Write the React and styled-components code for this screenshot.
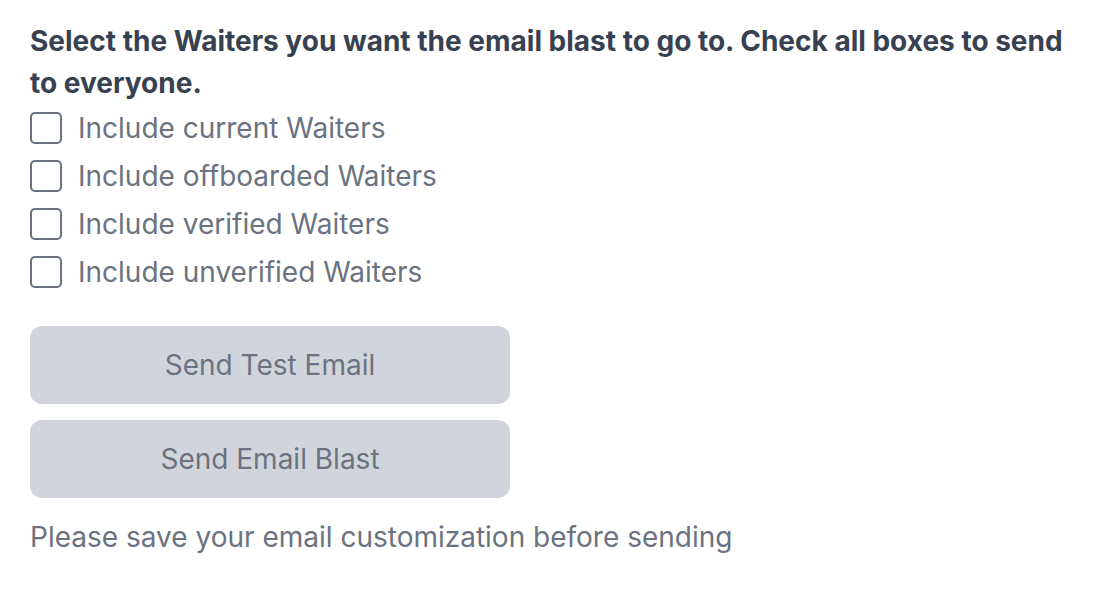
import React from 'react'
import styled, { createGlobalStyle } from 'styled-components'

const GlobalStyle = createGlobalStyle`
  body {
    margin: 0;
    background: #ffffff;
    font-family: Inter, "Noto Sans", sans-serif;
  }
`

const Panel = styled.div`
  display: flex;
  flex-direction: column;
  padding: 20px 30px;
  width: 1054px;
`

const Heading = styled.p`
  margin: 0;
  font-size: 28px;
  line-height: 42px;
  font-weight: 700;
  color: #374151;
`

const OptionList = styled.div`
  display: flex;
  flex-direction: column;
`

const Option = styled.label`
  display: flex;
  align-items: center;
  gap: 16px;
  height: 48px;
  font-size: 28px;
  color: #6b7280;
  cursor: pointer;
`

const Box = styled.input.attrs({ type: 'checkbox' })`
  appearance: none;
  margin: 0;
  width: 32px;
  height: 32px;
  border: 2px solid #6b7280;
  border-radius: 5px;
  background: #fff;
  box-sizing: border-box;
`

const Actions = styled.div`
  display: flex;
  flex-direction: column;
  gap: 16px;
  margin-top: 30px;
  width: 480px;
`

const Button = styled.button`
  height: 78px;
  border: none;
  border-radius: 12px;
  background: #d1d5db;
  color: #6b7280;
  font-family: inherit;
  font-size: 28px;
  cursor: not-allowed;
`

const Note = styled.p`
  margin: 19px 0 0;
  font-size: 28px;
  line-height: 40px;
  color: #6b7280;
`

const options = [
  'Include current Waiters',
  'Include offboarded Waiters',
  'Include verified Waiters',
  'Include unverified Waiters',
]

export default function App() {
  return (
    <>
      <GlobalStyle />
      <Panel>
        <Heading>
          Select the Waiters you want the email blast to go to. Check all boxes to send
          to everyone.
        </Heading>
        <OptionList>
          {options.map((text) => (
            <Option key={text}>
              <Box />
              {text}
            </Option>
          ))}
        </OptionList>
        <Actions>
          <Button disabled>Send Test Email</Button>
          <Button disabled>Send Email Blast</Button>
        </Actions>
        <Note>Please save your email customization before sending</Note>
      </Panel>
    </>
  )
}
